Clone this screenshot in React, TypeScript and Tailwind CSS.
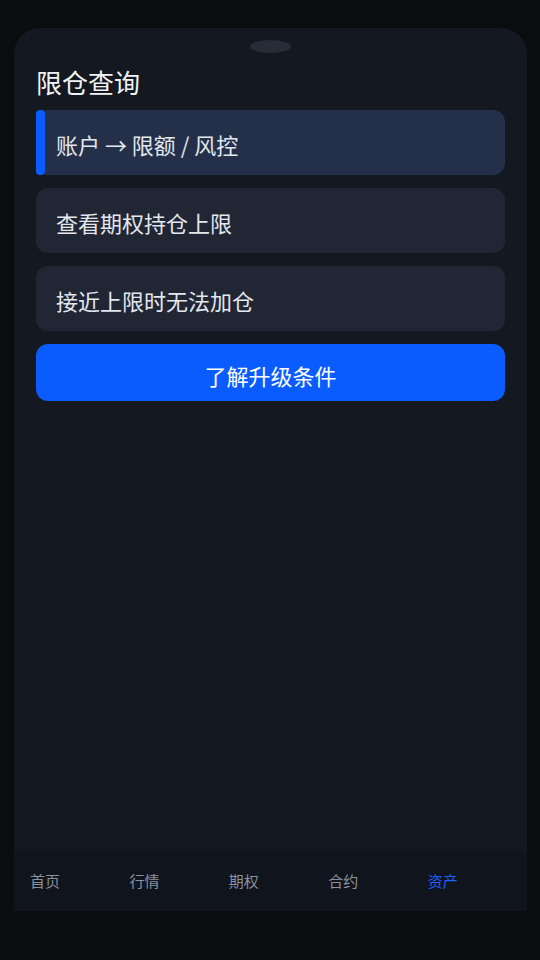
// 限仓查询页面：手机框、限仓提示卡片、升级按钮和底部导航

const tabs = [
  { label: "首页", active: false },
  { label: "行情", active: false },
  { label: "期权", active: false },
  { label: "合约", active: false },
  { label: "资产", active: true },
];

export default function App() {
  return (
    <div
      className="min-h-screen bg-[#0a0c10] pt-[28px] pl-[14px] pr-[13px]"
      style={{ fontFamily: '"Noto Sans CJK SC", "Noto Sans", sans-serif' }}
    >
      <div className="flex h-[883px] flex-col overflow-hidden rounded-t-[26px] bg-[#141821]">
        {/* 内容区 */}
        <div className="flex flex-1 flex-col px-[22px] pt-[12px]">
          <div className="mx-auto h-[13px] w-[41px] rounded-[50%] bg-[#262d38]" />
          <h1 className="mt-[12px] mb-[11px] text-[26px] leading-[34px] font-normal text-[#f1f3f6]">
            限仓查询
          </h1>

          <div className="flex flex-col gap-[13px]">
            {/* 当前选中项：左侧蓝条 */}
            <div className="flex">
              <div className="w-[9px] rounded-[4px] bg-[#0a5cff]" />
              <div className="flex-1 rounded-r-[12px] bg-[#243049] pt-[18px] pb-[14px] pl-[11px] text-[22px] leading-[33px] text-[#e3e7ee]">
                账户 → 限额 / 风控
              </div>
            </div>
            <div className="rounded-[12px] bg-[#212635] pt-[18px] pb-[14px] pl-[20px] text-[22px] leading-[33px] text-[#e3e7ee]">
              查看期权持仓上限
            </div>
            <div className="rounded-[12px] bg-[#212635] pt-[18px] pb-[14px] pl-[20px] text-[22px] leading-[33px] text-[#e3e7ee]">
              接近上限时无法加仓
            </div>
            <button className="rounded-[12px] bg-[#0a5cff] pt-[15px] pb-[9px] text-center text-[22px] leading-[33px] text-white">
              了解升级条件
            </button>
          </div>
        </div>

        {/* 底部导航 */}
        <nav className="flex h-[61px] items-center bg-[#10141c] pl-[16px]">
          {tabs.map((tab) => (
            <div
              key={tab.label}
              className={`w-[100px] text-[15px] leading-[20px] ${
                tab.active ? "text-[#1f5fff]" : "text-[#8a92a0]"
              }`}
            >
              {tab.label}
            </div>
          ))}
        </nav>
      </div>
    </div>
  );
}
